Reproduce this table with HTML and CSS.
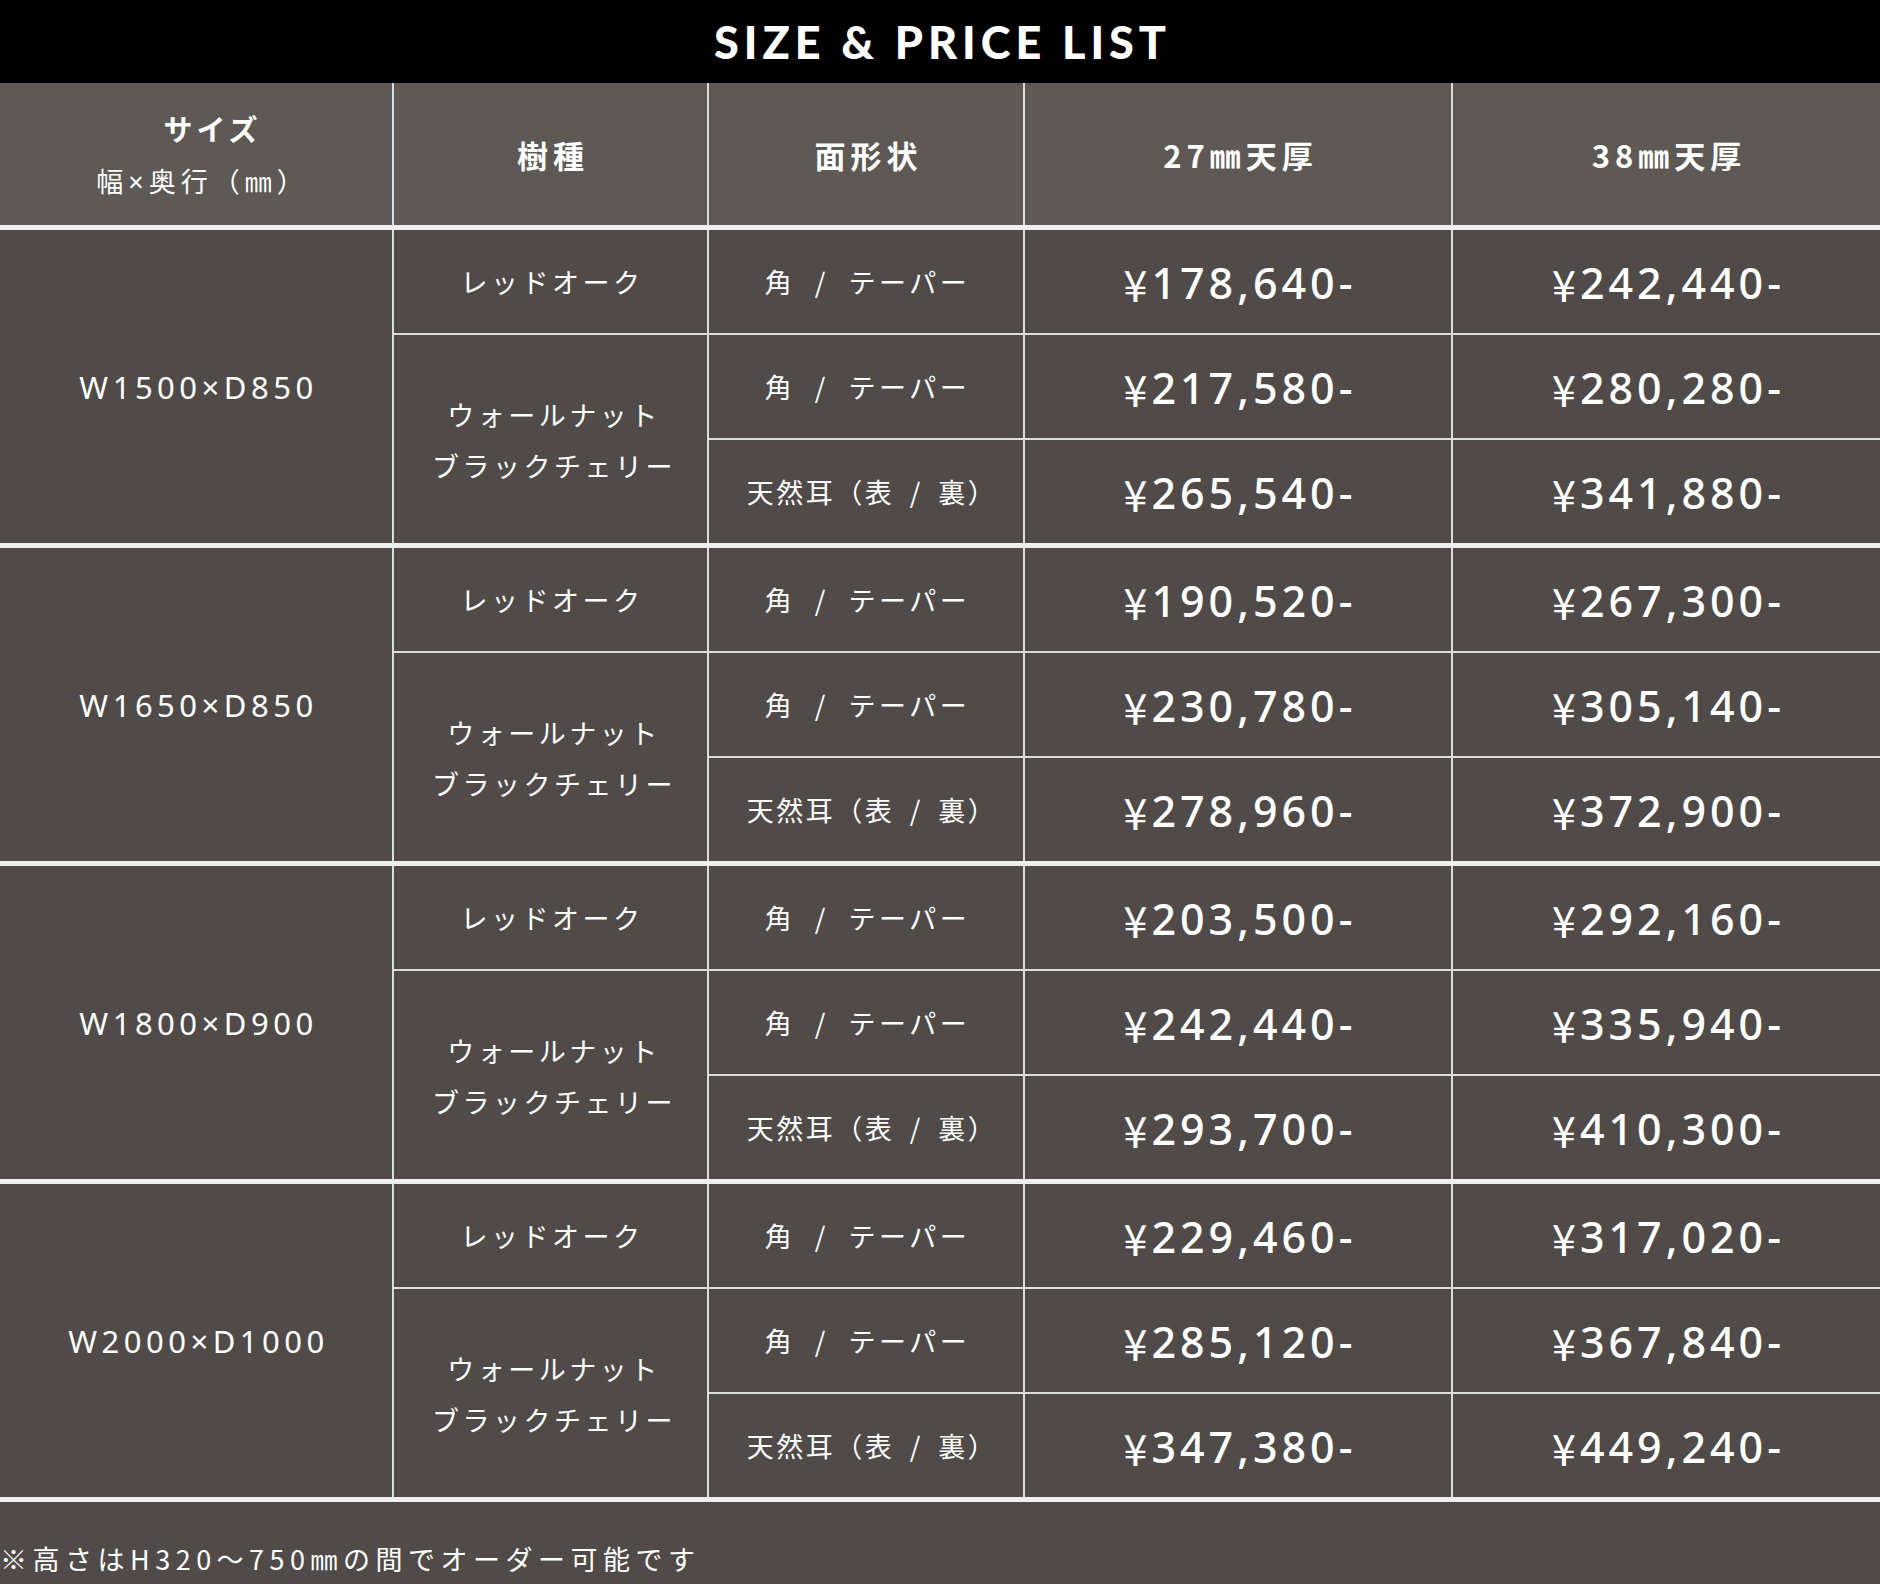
FILE: index.html
```html
<!DOCTYPE html>
<html lang="ja">
<head>
<meta charset="utf-8">
<title>SIZE &amp; PRICE LIST</title>
<link rel="stylesheet" href="styles.css">
</head>
<body>
<div class="page">
  <header class="title-bar"><h1 class="title">SIZE &amp; PRICE LIST</h1></header>

  <div class="thead">
    <div class="hcell"><span class="hbold hsize">サイズ</span><span class="hsub">幅<span class="x">×</span>奥行（㎜）</span></div>
    <div class="hcell"><span class="hbold">樹種</span></div>
    <div class="hcell"><span class="hbold">面形状</span></div>
    <div class="hcell"><span class="hbold">27㎜天厚</span></div>
    <div class="hcell"><span class="hbold">38㎜天厚</span></div>
  </div>

  <div class="group">
    <div class="cell size">W1500<span class="x">×</span>D850</div>
    <div class="cell wood">レッドオーク</div>
    <div class="cell shape">角 / テーパー</div>
    <div class="cell price"><span class="yen">¥</span>178,640-</div>
    <div class="cell price"><span class="yen">¥</span>242,440-</div>
    <div class="cell wood2">ウォールナット<br>ブラックチェリー</div>
    <div class="cell shape">角 / テーパー</div>
    <div class="cell price"><span class="yen">¥</span>217,580-</div>
    <div class="cell price"><span class="yen">¥</span>280,280-</div>
    <div class="cell shape natural">天然耳（表 / 裏）</div>
    <div class="cell price"><span class="yen">¥</span>265,540-</div>
    <div class="cell price"><span class="yen">¥</span>341,880-</div>
  </div>

  <div class="group">
    <div class="cell size">W1650<span class="x">×</span>D850</div>
    <div class="cell wood">レッドオーク</div>
    <div class="cell shape">角 / テーパー</div>
    <div class="cell price"><span class="yen">¥</span>190,520-</div>
    <div class="cell price"><span class="yen">¥</span>267,300-</div>
    <div class="cell wood2">ウォールナット<br>ブラックチェリー</div>
    <div class="cell shape">角 / テーパー</div>
    <div class="cell price"><span class="yen">¥</span>230,780-</div>
    <div class="cell price"><span class="yen">¥</span>305,140-</div>
    <div class="cell shape natural">天然耳（表 / 裏）</div>
    <div class="cell price"><span class="yen">¥</span>278,960-</div>
    <div class="cell price"><span class="yen">¥</span>372,900-</div>
  </div>

  <div class="group">
    <div class="cell size">W1800<span class="x">×</span>D900</div>
    <div class="cell wood">レッドオーク</div>
    <div class="cell shape">角 / テーパー</div>
    <div class="cell price"><span class="yen">¥</span>203,500-</div>
    <div class="cell price"><span class="yen">¥</span>292,160-</div>
    <div class="cell wood2">ウォールナット<br>ブラックチェリー</div>
    <div class="cell shape">角 / テーパー</div>
    <div class="cell price"><span class="yen">¥</span>242,440-</div>
    <div class="cell price"><span class="yen">¥</span>335,940-</div>
    <div class="cell shape natural">天然耳（表 / 裏）</div>
    <div class="cell price"><span class="yen">¥</span>293,700-</div>
    <div class="cell price"><span class="yen">¥</span>410,300-</div>
  </div>

  <div class="group">
    <div class="cell size">W2000<span class="x">×</span>D1000</div>
    <div class="cell wood">レッドオーク</div>
    <div class="cell shape">角 / テーパー</div>
    <div class="cell price"><span class="yen">¥</span>229,460-</div>
    <div class="cell price"><span class="yen">¥</span>317,020-</div>
    <div class="cell wood2">ウォールナット<br>ブラックチェリー</div>
    <div class="cell shape">角 / テーパー</div>
    <div class="cell price"><span class="yen">¥</span>285,120-</div>
    <div class="cell price"><span class="yen">¥</span>367,840-</div>
    <div class="cell shape natural">天然耳（表 / 裏）</div>
    <div class="cell price"><span class="yen">¥</span>347,380-</div>
    <div class="cell price"><span class="yen">¥</span>449,240-</div>
  </div>

  <p class="note">※高さはH320〜750㎜の間でオーダー可能です</p>
</div>
</body>
</html>
```

FILE: styles.css
```css
html, body {
  margin: 0;
  padding: 0;
}
body {
  background: #504b48;
  color: #ffffff;
  font-family: "Noto Sans CJK JP", "Noto Sans", sans-serif;
}
.page {
  width: 1880px;
  min-height: 1584px;
  background: #504b48;
}
.title-bar {
  height: 83px;
  background: #000000;
  display: flex;
  align-items: center;
  justify-content: center;
}
.title {
  margin: 0;
  font-family: "Lato", "Noto Sans", sans-serif;
  font-weight: 900;
  font-size: 45px;
  letter-spacing: 5px;
  padding-left: 5px;
  color: #ffffff;
  line-height: 1;
  padding-top: 1px;
}
.thead {
  display: grid;
  grid-template-columns: 392px 313px 314px 426px 1fr;
  column-gap: 2px;
  background: #dcdcdc;
  height: 142px;
  border-bottom: 5px solid #efefef;
}
.hcell {
  background: #5e5955;
  display: flex;
  flex-direction: column;
  align-items: center;
  justify-content: center;
  text-align: center;
}
.hbold {
  font-weight: 700;
  font-size: 31px;
  letter-spacing: 5px;
  padding-left: 5px;
  line-height: 1;
}
.hsize {
  font-size: 29px;
  letter-spacing: 4px;
  margin-left: 28px;
}
.hsub {
  font-weight: 400;
  font-size: 27px;
  letter-spacing: 5px;
  padding-left: 5px;
  margin-left: 8px;
  line-height: 1;
  margin-top: 24px;
}
.x {
  font-family: "Noto Sans", sans-serif;
}
.group {
  display: grid;
  grid-template-columns: 392px 313px 314px 426px 1fr;
  grid-template-rows: 103px 103px 103px;
  gap: 2px;
  background: #dcdcdc;
  border-bottom: 5px solid #efefef;
}
.cell {
  background: #504b48;
  display: flex;
  align-items: center;
  justify-content: center;
  text-align: center;
  font-weight: 400;
  font-size: 27px;
  letter-spacing: 3.5px;
  padding-left: 3px;
}
.size {
  grid-row: 1 / span 3;
  font-family: "Noto Sans", "Noto Sans CJK JP", sans-serif;
  font-size: 31px;
  letter-spacing: 4.5px;
  padding-left: 5px;
}
.wood2 {
  grid-row: 2 / span 2;
  grid-column: 2;
  line-height: 51px;
  padding-top: 2px;
  padding-left: 7px;
}
.shape {
  grid-column: 3;
  word-spacing: 10px;
}
.natural {
  word-spacing: 7px;
  letter-spacing: 2.5px;
  padding-left: 12px;
}
.price {
  font-family: "Noto Sans", "Noto Sans CJK JP", sans-serif;
  font-weight: 500;
  font-size: 43px;
  letter-spacing: 4px;
  padding-left: 4px;
  padding-top: 2px;
}
.yen {
  font-family: "Noto Sans CJK JP", sans-serif;
  font-weight: 400;
}
.note {
  margin: 0;
  padding: 43px 0 0 0;
  font-size: 27px;
  letter-spacing: 5.5px;
  line-height: 1;
}
```
